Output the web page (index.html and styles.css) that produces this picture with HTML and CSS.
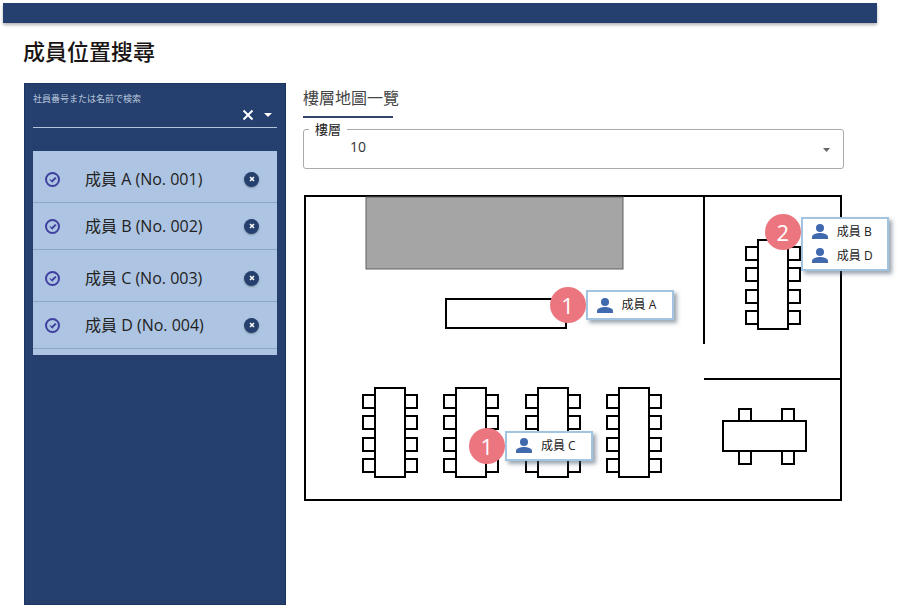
FILE: index.html
```
<!DOCTYPE html>
<html lang="zh-Hant">

<head>
    <meta charset="utf-8">
    <title>成員位置搜尋</title>
    <link rel="stylesheet" href="styles.css">
</head>

<body>
    <header class="topbar"></header>
    <h1 class="page-title">成員位置搜尋</h1>

    <div class="layout">
        <aside class="sidebar">
            <form class="search">
                <label class="search-label" for="keyword" lang="ja">社員番号または名前で検索</label>
                <div class="search-row">
                    <input class="search-input" type="text" id="keyword">
                    <button class="search-btn" type="reset" aria-label="清除">
                        <svg width="12" height="12" viewBox="0 0 12 12"><path d="M1.5 1.5l9 9M10.5 1.5l-9 9" stroke="#fff" stroke-width="2" /></svg>
                    </button>
                    <button class="search-btn" type="button" aria-label="展開">
                        <svg width="8" height="4" viewBox="0 0 8 4"><path d="M0 0h8L4 4z" fill="#fff" /></svg>
                    </button>
                </div>
            </form>

            <ul class="members">
                <li class="member">
                    <input class="member-check" type="checkbox" id="m1" checked>
                    <label class="member-name" for="m1">成員 A (No. 001)</label>
                    <button class="member-remove" type="button" aria-label="移除成員 A"><svg width="8" height="8" viewBox="0 0 8 8"><path d="M2 2l4 4M6 2l-4 4" /></svg></button>
                </li>
                <li class="member">
                    <input class="member-check" type="checkbox" id="m2" checked>
                    <label class="member-name" for="m2">成員 B (No. 002)</label>
                    <button class="member-remove" type="button" aria-label="移除成員 B"><svg width="8" height="8" viewBox="0 0 8 8"><path d="M2 2l4 4M6 2l-4 4" /></svg></button>
                </li>
                <li class="member">
                    <input class="member-check" type="checkbox" id="m3" checked>
                    <label class="member-name" for="m3">成員 C (No. 003)</label>
                    <button class="member-remove" type="button" aria-label="移除成員 C"><svg width="8" height="8" viewBox="0 0 8 8"><path d="M2 2l4 4M6 2l-4 4" /></svg></button>
                </li>
                <li class="member">
                    <input class="member-check" type="checkbox" id="m4" checked>
                    <label class="member-name" for="m4">成員 D (No. 004)</label>
                    <button class="member-remove" type="button" aria-label="移除成員 D"><svg width="8" height="8" viewBox="0 0 8 8"><path d="M2 2l4 4M6 2l-4 4" /></svg></button>
                </li>
            </ul>
        </aside>

        <main class="content">
            <h2 class="section-title">樓層地圖一覽</h2>

            <fieldset class="floor">
                <legend class="floor-legend"><label for="floor">樓層</label></legend>
                <div class="floor-row">
                    <select class="floor-select" id="floor">
                        <option>10</option>
                    </select>
                    <svg class="floor-arrow" width="7" height="4" viewBox="0 0 7 4"><path d="M0 0h7L3.5 4z" fill="#666" /></svg>
                </div>
            </fieldset>

            <div class="map">
                <svg class="map-plan" viewBox="0 0 538 306">
                    <defs>
                        <!-- desk with four seats on each side -->
                        <g id="desk">
                            <path d="M-12 7h12v13h-12zM-12 28h12v13h-12zM-12 50h12v13h-12zM-12 71h12v13h-12z" />
                            <path d="M30 7h12v13h-12zM30 28h12v13h-12zM30 50h12v13h-12zM30 71h12v13h-12z" />
                            <rect width="30" height="89" />
                        </g>
                        <g id="person">
                            <circle cx="8" cy="4" r="4" />
                            <path d="M0 15v-2c0-3 5-4 8-4s8 1 8 4v2z" />
                        </g>
                    </defs>
                    <g fill="#fff" stroke="#000" stroke-width="2">
                        <rect x="1" y="1" width="536" height="304" />
                        <rect x="142" y="104" width="120" height="29" />
                        <path d="M400 1v148M400 184h137" />
                        <use href="#desk" x="454" y="45" />
                        <use href="#desk" x="71" y="193" />
                        <use href="#desk" x="152" y="193" />
                        <use href="#desk" x="234" y="193" />
                        <use href="#desk" x="315" y="193" />
                        <path d="M435 214h12v12h-12zM478 214h12v12h-12zM435 256h12v13h-12zM478 256h12v13h-12z" />
                        <rect x="419" y="226" width="83" height="30" />
                    </g>
                    <rect x="62" y="2" width="257" height="72" fill="#a5a5a5" stroke="#606060" />
                </svg>

                <div class="pin pin-a">
                    <button class="pin-count" type="button">1</button>
                    <ul class="pin-card">
                        <li class="pin-member"><svg width="16" height="15" fill="#4069ae"><use href="#person" /></svg>成員 A</li>
                    </ul>
                </div>
                <div class="pin pin-b">
                    <button class="pin-count" type="button">2</button>
                    <ul class="pin-card">
                        <li class="pin-member"><svg width="16" height="15" fill="#4069ae"><use href="#person" /></svg>成員 B</li>
                        <li class="pin-member"><svg width="16" height="15" fill="#4069ae"><use href="#person" /></svg>成員 D</li>
                    </ul>
                </div>
                <div class="pin pin-c">
                    <button class="pin-count" type="button">1</button>
                    <ul class="pin-card">
                        <li class="pin-member"><svg width="16" height="15" fill="#4069ae"><use href="#person" /></svg>成員 C</li>
                    </ul>
                </div>
            </div>
        </main>
    </div>
</body>

</html>
```
FILE: styles.css
```
* {
    box-sizing: border-box;
}

body {
    font-family: "Open Sans", "Noto Sans CJK TC", sans-serif;
    margin: 0;
    padding: 3px 0 5px 3px;
    min-height: 100vh;
    display: flex;
    flex-direction: column;
    background-color: #fff;
    color: #222;
}

button,
input,
select {
    font-family: inherit;
    margin: 0;
    padding: 0;
    border: none;
    background: none;
}

button {
    cursor: pointer;
}

ul {
    list-style: none;
    margin: 0;
    padding: 0;
}

.topbar {
    height: 20px;
    margin-right: 23px;
    background-color: #25406e;
    box-shadow: 0 2px 3px rgba(0, 0, 0, 0.3);
}

.page-title {
    margin: 12px 0 16px 20px;
    font-size: 22px;
    line-height: 32px;
    font-weight: 500;
    color: #1a1414;
}

.layout {
    flex: 1;
    display: flex;
    gap: 17px;
    margin: 0 56px 0 21px;
}

/* left panel */
.sidebar {
    flex: 0 0 262px;
    padding: 8px;
    background-color: #25406e;
    border: 1px solid #1c3560;
}

.search {
    border-bottom: 1px solid #b4c3dc;
}

.search-label {
    display: block;
    font-family: "Noto Sans CJK JP", sans-serif;
    font-size: 9px;
    line-height: 14px;
    color: #b9c6dc;
}

.search-row {
    display: flex;
    align-items: center;
    gap: 10px;
    height: 21px;
    padding: 0 5px 4px 0;
}

.search-input {
    flex: 1;
    min-width: 0;
    height: 17px;
    font-size: 12px;
    color: #fff;
    outline: none;
}

.search-btn {
    display: flex;
}

.members {
    margin-top: 23px;
    padding-bottom: 6px;
    background-color: #adc5e2;
}

.member {
    display: flex;
    align-items: center;
    height: 47px;
    padding: 0 18px 0 12px;
    border-bottom: 1px solid #8ca6c8;
}

.member:nth-child(odd) {
    height: 52px;
    padding-top: 5px;
}

.member-check {
    appearance: none;
    display: flex;
    justify-content: center;
    width: 15px;
    height: 15px;
    border: 2px solid #3f3f9f;
    border-radius: 50%;
}

.member-check:checked::before {
    content: "";
    width: 5px;
    height: 2px;
    margin-top: 3px;
    border-left: 1px solid #3f3f9f;
    border-bottom: 2px solid #3f3f9f;
    transform: rotate(-45deg);
}

.member-name {
    flex: 1;
    margin-left: 25px;
    font-size: 16px;
    line-height: 24px;
}

.member-remove {
    display: flex;
    align-items: center;
    justify-content: center;
    width: 15px;
    height: 15px;
    border-radius: 50%;
    background-color: #25406e;
    box-shadow: 0 1px 2px rgba(0, 0, 0, 0.3);
    stroke: #fff;
    stroke-width: 1.5;
}

/* floor map */
.content {
    flex: 1;
    min-width: 0;
}

.section-title {
    margin: 3px 0;
    font-size: 16px;
    line-height: 24px;
    font-weight: 400;
    color: #444;
}

.section-title::after {
    content: "";
    display: block;
    width: 90px;
    height: 2px;
    margin-top: 6px;
    background-color: #34456a;
}

.floor {
    margin: 0;
    padding: 0 13px 0 46px;
    min-width: 0;
    border: 1px solid #aaa;
    border-radius: 3px;
}

.floor-legend {
    margin-left: -41px;
    padding: 0 6px;
    font-size: 13px;
    line-height: 16px;
}

.floor-row {
    display: flex;
    align-items: flex-start;
    height: 31px;
}

.floor-select {
    appearance: none;
    flex: 1;
    height: 20px;
    font-size: 14px;
    line-height: 20px;
    color: #333;
}

.floor-arrow {
    margin-top: 11px;
}

.map {
    position: relative;
    margin: 26px 2px 0 1px;
}

.map-plan {
    display: block;
    width: 100%;
}

/* the offsets are the centre of the round marker */
.pin {
    position: absolute;
    display: flex;
    align-items: flex-start;
    margin: -18px 0 0 -18px;
}

.pin-a {
    left: 49%;
    top: 36%;
}

.pin-b {
    left: 89%;
    top: 12%;
}

.pin-c {
    left: 34%;
    top: 82%;
}

.pin-count {
    width: 36px;
    height: 36px;
    border-radius: 50%;
    background-color: #ec7680;
    color: #fff;
    font-size: 22px;
    line-height: 32px;
}

.pin-card {
    min-width: 88px;
    margin-top: 3px;
    padding: 1px 9px;
    background-color: #fff;
    border: 2px solid #a3c4e0;
    box-shadow: 3px 3px 4px rgba(60, 80, 100, 0.5);
}

.pin-member {
    display: flex;
    align-items: center;
    gap: 9px;
    font-size: 12px;
    line-height: 24px;
    white-space: nowrap;
}
```
